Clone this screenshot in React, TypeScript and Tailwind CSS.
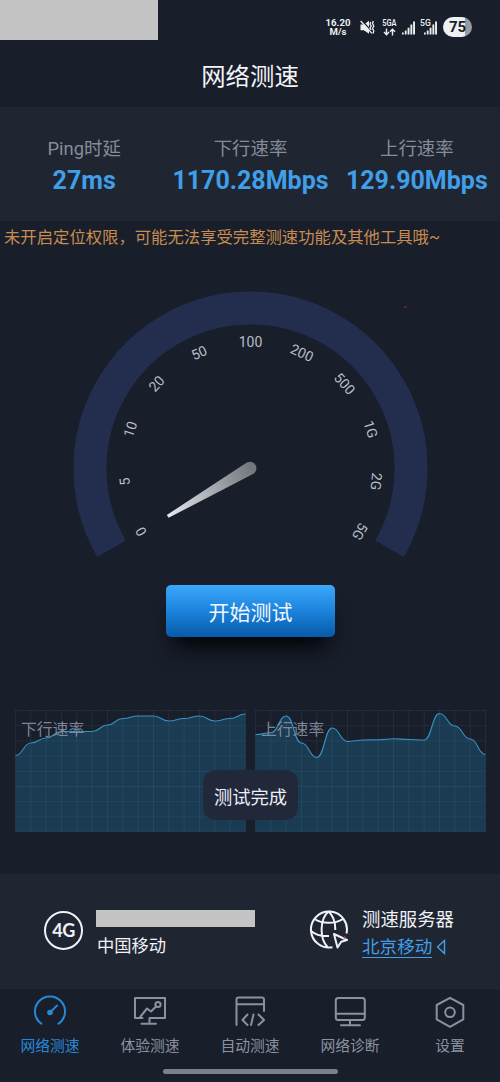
import React from "react";

const CELL = 230 / 15;
const DOWN = [45.5, 33, 28, 21.5, 21.5, 21.5, 15, 8.5, 6, 6, 11, 8.5, 6, 11, 8.5, 4];
const UP = [24.5, 22.7, 6, 33, 47.5, 18, 31.5, 30, 29.7, 28.7, 29.5, 30, 3.5, 16, 29, 44.5];

function curve(values: number[]) {
  return values
    .map((y, i) => {
      const x = i * CELL;
      if (i === 0) return `M0 ${y}`;
      const mid = x - CELL / 2;
      return `C${mid} ${values[i - 1]} ${mid} ${y} ${x} ${y}`;
    })
    .join(" ");
}

function RateChart({ label, values }: { label: string; values: number[] }) {
  const d = curve(values);
  return (
    <div className="relative h-[122px] w-[231px]">
      <svg className="block" width="231" height="122" viewBox="-0.5 0 231 122">
        <path d={`${d} L230 122 L0 122 Z`} fill="#1a3b51" />
        <g stroke="#7fa6bd" strokeOpacity="0.1" strokeWidth="1">
          {Array.from({ length: 16 }, (_, i) => (
            <line key={`v${i}`} x1={i * CELL} x2={i * CELL} y1="0" y2="122" />
          ))}
          {Array.from({ length: 9 }, (_, i) => (
            <line key={`h${i}`} x1="0" x2="230" y1={0.5 + i * 15.2} y2={0.5 + i * 15.2} />
          ))}
        </g>
        <path d={d} fill="none" stroke="#3592c4" strokeWidth="1.1" />
      </svg>
      <span className="absolute top-[8px] left-[6px] text-[15.8px] leading-6 text-[#8b93a7]/90">{label}</span>
    </div>
  );
}

const TICKS = ["0", "5", "10", "20", "50", "100", "200", "500", "1G", "2G", "5G"];

function Gauge() {
  return (
    <svg className="block" width="360" height="270" viewBox="70 290 360 270">
      <defs>
        <linearGradient id="needle" gradientUnits="userSpaceOnUse" x1="168" y1="516" x2="252" y2="468">
          <stop offset="0" stopColor="#e4e7ec" />
          <stop offset="0.5" stopColor="#abaeb4" />
          <stop offset="1" stopColor="#73777e" />
        </linearGradient>
      </defs>
      <path d="M111.5 548.7 A160.5 160.5 0 1 1 389.5 548.7" fill="none" stroke="#232e4e" strokeWidth="33" />
      {TICKS.map((t, i) => (
        <text
          key={t}
          x="250.5"
          y="346.8"
          textAnchor="middle"
          fontSize="14"
          fill="#b9bdc6"
          transform={`rotate(${-120 + i * 24} 250.5 468.3)`}
        >
          {t}
        </text>
      ))}
      <path d="M166.8 515 L246.8 462.6 A6.4 6.4 0 1 1 253 474 L168.6 517.8 Z" fill="url(#needle)" />
    </svg>
  );
}

function Stat({ label, value }: { label: string; value: string }) {
  return (
    <div className="flex w-[167px] flex-col items-center whitespace-nowrap">
      <span className="text-[18.4px] leading-8 text-[#868c99]">{label}</span>
      <span className="text-[25px] leading-8 font-bold text-[#409fe8]">{value}</span>
    </div>
  );
}

function Signal() {
  return (
    <svg width="13" height="14" viewBox="0 0 13 14" fill="#eceef2">
      <rect x="0" y="11.5" width="1.7" height="2" />
      <rect x="2.8" y="9.5" width="1.8" height="4" />
      <rect x="5.6" y="6.7" width="1.9" height="6.8" />
      <rect x="8.4" y="3.5" width="1.9" height="10" />
      <rect x="11.1" y="0.5" width="1.9" height="13" />
    </svg>
  );
}

function StatusBar() {
  return (
    <div className="flex h-10 items-start justify-between">
      <div className="h-10 w-[158px] bg-[#c4c4c4]" />
      <div className="flex pt-[17px] pr-[28px] text-[#eceef2]">
        <div className="flex w-[26px] flex-col items-center pt-px text-[9.6px] leading-[9px] font-bold">
          <span>16.20</span>
          <span>M/s</span>
        </div>
        <svg className="mt-[3px] ml-[9px]" width="15" height="15" viewBox="0 0 15 15">
          <path d="M0.5 4.5 H3.8 L9 0.8 V13.8 L3.8 10.2 H0.5 Z" fill="#eceef2" />
          <path d="M1.5 0.2 L13 12.5" stroke="#181e2a" strokeWidth="1.4" />
          <path d="M0.6 1 L12 13.4" stroke="#eceef2" strokeWidth="1.3" />
          <path d="M10.8 2 L10 4 L11.2 6 L10 8 L11 10 M13.3 1 L12.5 3.5 L13.8 6 L12.5 8.5 L13.8 11 L13 13.5" fill="none" stroke="#eceef2" strokeWidth="1.3" />
        </svg>
        <div className="ml-[7px] flex w-[14px] flex-col items-center pt-px">
          <span className="origin-center scale-x-[0.76] text-[9.8px] leading-[10px] font-semibold">5GA</span>
          <svg width="13" height="8" viewBox="0 0 12 8" fill="none" stroke="#eceef2" strokeWidth="1.4">
            <path d="M3 0.5 V6.5 M0.5 4 L3 6.7 L5.5 4 M9 7.5 V1.3 M6.5 3.8 L9 1.2 L11.5 3.8" />
          </svg>
        </div>
        <div className="mt-[4px] ml-[6px]"><Signal /></div>
        <div className="relative mt-[4px] ml-[9px]">
          <Signal />
          <span className="absolute -top-[2px] -left-[4px] text-[8.6px] leading-[8px] font-medium">5G</span>
        </div>
        <div className="ml-[6px] flex h-[20px] w-[29px] items-center justify-center rounded-full bg-linear-to-r from-[#eff0f3] from-75% to-[#969aa3] to-75% pt-px text-[15px] font-bold text-[#181e2a]">
          75
        </div>
      </div>
    </div>
  );
}

function NavItem({ label, active, children }: { label: string; active?: boolean; children: React.ReactNode }) {
  return (
    <div className={`flex w-[100px] flex-col items-center ${active ? "text-[#2788d8]" : "text-[#8b91a0]"}`}>
      <svg width="34" height="34" viewBox="0 0 34 34" fill="none" stroke="currentColor" strokeWidth="2" strokeLinejoin="round" strokeLinecap="round">
        {children}
      </svg>
      <span className="mt-[6px] text-[14.8px] leading-6">{label}</span>
    </div>
  );
}

export default function App() {
  return (
    <div className="relative flex h-[1082px] w-[500px] flex-col overflow-hidden bg-[#181e2a] font-['Roboto','Noto_Sans_CJK_SC',sans-serif]">
      <StatusBar />
      <h1 className="flex h-[67px] items-center justify-center pt-[7px] text-[24.4px] text-[#f2f4f8]">网络测速</h1>

      <section className="flex h-[114px] bg-[#1f2632] pt-[26px] pl-px">
        <Stat label="Ping时延" value="27ms" />
        <Stat label="下行速率" value="1170.28Mbps" />
        <Stat label="上行速率" value="129.90Mbps" />
      </section>

      <p className="mt-[5px] h-6 pl-[4px] text-[16.35px] leading-6 whitespace-nowrap text-[#c98c50]">
        未开启定位权限，可能无法享受完整测速功能及其他工具哦~
      </p>

      <main className="relative mt-[40px] flex flex-col items-center">
        <Gauge />
        <i className="absolute top-[16px] left-[404px] h-[2px] w-[3px] rounded-full bg-[#7d1d20]" />
        <button className="mt-[25px] ml-px h-[52px] w-[169px] rounded-[5px] bg-linear-to-b from-[#3aa8fa] via-[#1c83dc] to-[#075aa8] pt-[5px] text-[21px] text-[#f0f7ff] shadow-[0_18px_20px_-8px_#030408]">
          开始测试
        </button>
      </main>

      <section className="relative mt-[73px] flex gap-[9px] pl-[15px]">
        <RateChart label="下行速率" values={DOWN} />
        <RateChart label="上行速率" values={UP} />
        <div className="absolute top-[60px] left-[203px] flex h-[50px] w-[95px] items-center justify-center rounded-[13px] bg-[#20283a] pt-[5px] text-[18.3px] text-[#eceff5]">
          测试完成
        </div>
      </section>

      <section className="mt-[42px] flex h-[114px] bg-[#1f2632] text-[#f0f2f6]">
        <div className="flex pt-[36px] pl-[44px]">
          <div className="mt-[1px] flex size-[39px] items-center justify-center rounded-full border-2 border-[#f0f2f6] font-['Lato','Roboto',sans-serif] text-[18px] font-bold tracking-[-0.5px]">
            4G
          </div>
          <div className="ml-[13px] w-[159px]">
            <div className="h-[17px] bg-[#c4c4c4]" />
            <div className="mt-[7px] pl-px text-[17.3px] leading-6">中国移动</div>
          </div>
        </div>
        <div className="flex pt-[34px] pl-[54px]">
          <svg className="mt-[2px]" width="42" height="42" viewBox="0 0 42 42" fill="none" stroke="#f0f2f6" strokeWidth="2">
            <path d="M37.5 23.5 A18 18 0 1 0 23.5 37.2 M19.5 1.5 C10.5 9 10.5 29 18.5 37 M19.5 1.5 C24.5 6 26.5 12 26.2 20 M5.5 9 C13 14 26 14 34 9 M2 21 C8 26 14 26.5 20 26" />
            <path d="M25 24 L38 30 L32.2 31.8 L28.5 37.5 Z" strokeLinejoin="round" />
            <circle cx="35.8" cy="27.5" r="1.2" fill="#b93640" stroke="none" />
          </svg>
          <div className="ml-[11px] flex flex-col items-start">
            <span className="text-[18.4px] leading-6">测速服务器</span>
            <span className="mt-[3px] flex items-center text-[#409fe8]">
              <span className="h-[23px] border-b border-[#409fe8] text-[17.6px] leading-6">北京移动</span>
              <svg className="ml-[4px]" width="10" height="16" viewBox="0 0 10 16" fill="none" stroke="currentColor" strokeWidth="1.4">
                <path d="M8.5 1.5 L1.5 8 L8.5 14.5 Z" />
              </svg>
            </span>
          </div>
        </div>
      </section>

      <nav className="flex h-[81px] border-t border-[#252632] pt-[5px]">
        <NavItem label="网络测速" active>
          <path d="M8.5 29.8 A15 15 0 1 1 25.5 29.8" />
          <path d="M17 18.5 L24 11.5" />
          <circle cx="17" cy="18.5" r="2.8" fill="currentColor" stroke="none" />
        </NavItem>
        <NavItem label="体验测速">
          <path d="M2 4 H32 V24 H16.5 V29.7 M2 4 V24 H9.5 M8.5 29.7 H23 M7.5 22.5 L14 14.5 L18 17.5 L23 12.5" />
          <circle cx="25" cy="10.5" r="2.6" />
        </NavItem>
        <NavItem label="自动测速">
          <path d="M3.5 31 V5.5 Q3.5 3.5 5.5 3.5 H29 Q31 3.5 31 5.5 V17 M4 10.3 H31" />
          <path d="M14.5 20.5 L9.5 26 L14.5 31 M20.5 20.5 L18 31 M25.5 20.5 L31 26 L25.5 31" />
        </NavItem>
        <NavItem label="网络诊断">
          <rect x="2.8" y="4" width="29" height="22" rx="2.5" />
          <path d="M3 19.7 H31.5 M17 26 V31 M8 31.2 H27" />
        </NavItem>
        <NavItem label="设置">
          <path d="M17 3.8 L30.3 11 V25.4 L17 32.8 L3.7 25.4 V11 Z" />
          <circle cx="17" cy="18.3" r="4.8" />
        </NavItem>
      </nav>
      <div className="mx-auto h-[5px] w-[175px] rounded-full bg-[#7d808a]" />
    </div>
  );
}
